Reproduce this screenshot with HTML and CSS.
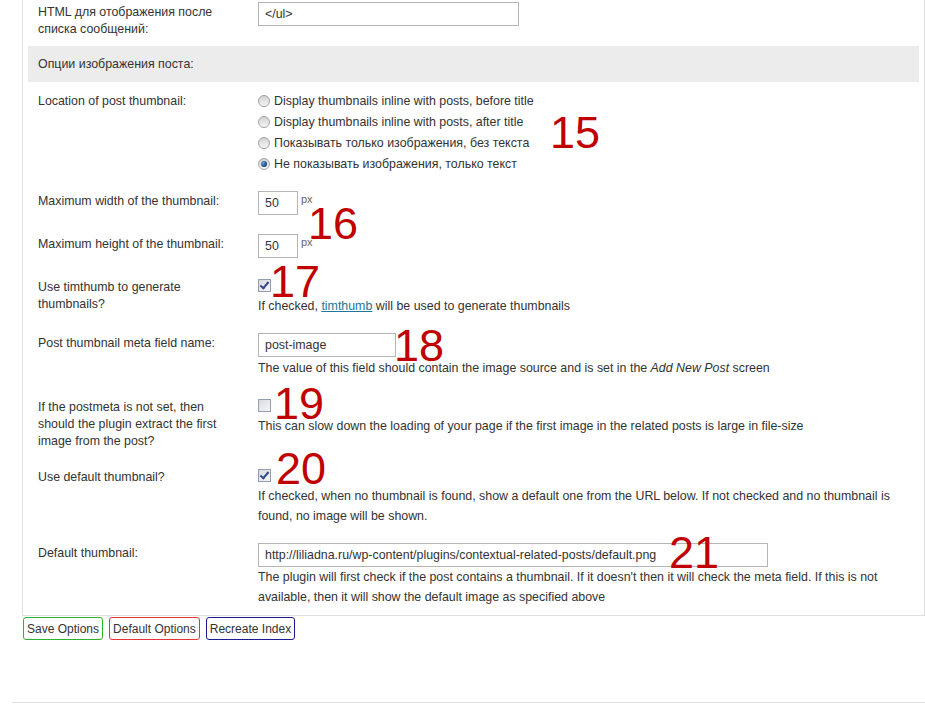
FILE: index.html
```html
<!DOCTYPE html>
<html lang="ru">
<head>
  <meta charset="UTF-8">
  <title>Contextual Related Posts</title>
  <link rel="stylesheet" href="styles.css">
</head>
<body>
  <div class="wrap">
    <div class="postbox">
      <table class="form-table">
        <tr>
          <th>HTML для отображения после списка сообщений:</th>
          <td><input type="text" class="field wide-1" value="&lt;/ul&gt;"></td>
        </tr>
        <tr class="section">
          <th colspan="2">Опции изображения поста:</th>
        </tr>
        <tr>
          <th>Location of post thumbnail:</th>
          <td class="radios">
            <label class="radio-line"><span class="radio"></span>Display thumbnails inline with posts, before title</label>
            <label class="radio-line"><span class="radio"></span>Display thumbnails inline with posts, after title</label>
            <label class="radio-line"><span class="radio"></span>Показывать только изображения, без текста</label>
            <label class="radio-line"><span class="radio on"></span>Не показывать изображения, только текст</label>
            <span class="mark m15">15</span>
          </td>
        </tr>
        <tr>
          <th>Maximum width of the thumbnail:</th>
          <td><input type="text" class="field small" value="50"><span class="unit">px</span>
            <span class="mark m16">16</span>
          </td>
        </tr>
        <tr>
          <th>Maximum height of the thumbnail:</th>
          <td><input type="text" class="field small" value="50"><span class="unit">px</span></td>
        </tr>
        <tr class="snug">
          <th>Use timthumb to generate thumbnails?</th>
          <td>
            <div class="check-line"><span class="checkbox checked"></span></div>
            <p class="desc">If checked, <a href="#">timthumb</a> will be used to generate thumbnails</p>
            <span class="mark m17">17</span>
          </td>
        </tr>
        <tr>
          <th>Post thumbnail meta field name:</th>
          <td>
            <input type="text" class="field medium" value="post-image">
            <p class="desc after-field">The value of this field should contain the image source and is set in the <em>Add New Post</em> screen</p>
            <span class="mark m18">18</span>
          </td>
        </tr>
        <tr>
          <th>If the postmeta is not set, then should the plugin extract the first image from the post?</th>
          <td>
            <div class="check-line"><span class="checkbox"></span></div>
            <p class="desc">This can slow down the loading of your page if the first image in the related posts is large in file-size</p>
            <span class="mark m19">19</span>
          </td>
        </tr>
        <tr class="snug">
          <th>Use default thumbnail?</th>
          <td>
            <div class="check-line"><span class="checkbox checked"></span></div>
            <p class="desc">If checked, when no thumbnail is found, show a default one from the URL below. If not checked and no thumbnail is found, no image will be shown.</p>
            <span class="mark m20">20</span>
          </td>
        </tr>
        <tr class="last">
          <th>Default thumbnail:</th>
          <td>
            <input type="text" class="field large" value="http://liliadna.ru/wp-content/plugins/contextual-related-posts/default.png">
            <p class="desc">The plugin will first check if the post contains a thumbnail. If it doesn't then it will check the meta field. If this is not available, then it will show the default image as specified above</p>
            <span class="mark m21">21</span>
          </td>
        </tr>
      </table>
    </div>

    <div class="submit">
      <button class="btn btn-save">Save Options</button>
      <button class="btn btn-reset">Default Options</button>
      <button class="btn btn-recreate">Recreate Index</button>
    </div>
  </div>
  <div class="footer"></div>
</body>
</html>
```

FILE: styles.css
```css
body {
  margin: 0;
  font-family: "Liberation Sans", Arial, sans-serif;
  font-size: 12.4px;
  color: #333;
  background-color: #fff;
}
.wrap {
  margin-left: 22px;
  width: 903px;
}
.postbox {
  margin-top: -8px;
  border: 1px solid #dfdfdf;
  padding: 0 5px;
}
.form-table {
  width: 100%;
  border-collapse: collapse;
}
.form-table th {
  width: 192px;
  padding: 11px 28px 8px 10px;
  text-align: left;
  vertical-align: top;
  font-weight: normal;
  line-height: 17px;
}
.form-table td {
  position: relative;
  padding: 9px 10px 10px 0;
  vertical-align: top;
  line-height: 20px;
}
.form-table .snug td {
  padding-bottom: 8px;
}
.form-table .last td {
  padding-bottom: 8px;
}
.section th {
  background-color: #ececec;
  padding: 10px 10px 9px 10px;
}
.radios.radios {
  padding-top: 8px;
  padding-bottom: 8px;
}
.radio-line {
  display: flex;
  align-items: center;
  height: 21px;
  line-height: 21px;
  padding-top: 1px;
  box-sizing: border-box;
}
.radio {
  width: 10px;
  height: 10px;
  border: 1px solid #a3a3a3;
  border-radius: 50%;
  background: linear-gradient(#d2d2d2, #f6f6f6);
  margin-right: 4px;
  position: relative;
}
.radio.on::after {
  content: "";
  position: absolute;
  left: 2px;
  top: 2px;
  width: 6px;
  height: 6px;
  border-radius: 50%;
  background: radial-gradient(circle at 35% 35%, #6ea6d8, #0d3f75 70%);
}
.field {
  display: inline-block;
  vertical-align: top;
  box-sizing: border-box;
  height: 24px;
  border: 1px solid #b5b5b5;
  padding: 0 6px;
  margin: 0;
  font-family: "Liberation Sans", Arial, sans-serif;
  font-size: 12.4px;
  color: #333;
  background-color: #fff;
}
.wide-1 {
  width: 261px;
}
.small {
  width: 40px;
}
.medium {
  width: 138px;
}
.large {
  width: 510px;
}
.unit {
  display: inline-block;
  vertical-align: top;
  margin-left: 3px;
  font-size: 11px;
  line-height: 16px;
  color: #666;
}
.check-line {
  height: 17px;
}
.checkbox {
  display: block;
  box-sizing: border-box;
  width: 13px;
  height: 13px;
  margin-top: 2px;
  border: 1px solid #939cb0;
  background: linear-gradient(135deg, #d6d9e0, #f7f7f9);
  position: relative;
}
.checkbox.checked::after {
  content: "";
  position: absolute;
  left: 3px;
  top: 0px;
  width: 3px;
  height: 7px;
  border: solid #34478a;
  border-width: 0 2px 2px 0;
  transform: rotate(40deg);
}
.desc {
  margin: 0;
  line-height: 20px;
}
.desc.after-field {
  margin-top: 1px;
}
.desc a {
  color: #21759b;
}
.mark {
  position: absolute;
  font-family: "Liberation Sans", Arial, sans-serif;
  font-size: 45px;
  line-height: 45px;
  color: #c00000;
}
.m15 { left: 292px; top: 28px; }
.m16 { left: 50px; top: 19px; }
.m17 { left: 12px; top: -9px; }
.m18 { left: 136px; top: -1px; }
.m19 { left: 16px; top: -7px; }
.m20 { left: 18px; top: -12px; }
.m21 { left: 411px; top: -4px; }
.submit {
  display: flex;
  gap: 6px;
  margin-top: 1px;
  padding-left: 1px;
}
.btn {
  box-sizing: border-box;
  height: 23px;
  padding: 0 3px;
  border-width: 1px;
  border-style: solid;
  border-radius: 3px;
  background-color: #fff;
  font-family: "Liberation Sans", Arial, sans-serif;
  font-size: 12px;
  color: #333;
}
.btn-save {
  border-color: #2db22d;
}
.btn-reset {
  border-color: #e8333b;
}
.btn-recreate {
  border-color: #1c1c8e;
}
.footer {
  margin: 62px 0 0 12px;
  border-top: 1px solid #dfdfdf;
}
```
